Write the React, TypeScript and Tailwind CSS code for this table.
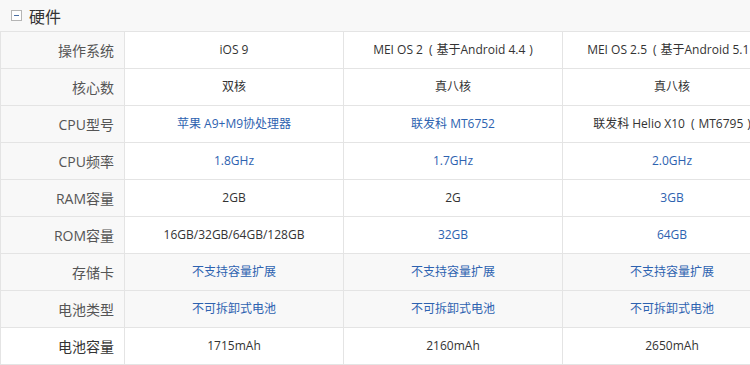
import React from 'react'

type Cell = { text: string; blue?: boolean }

interface Row {
  label: string
  cells: Cell[]
  shaded?: boolean
  strong?: boolean
}

const d = (text: string): Cell => ({ text })
const b = (text: string): Cell => ({ text, blue: true })

// wide spacing around the parens, like the CJK brackets in the original
const paren = (s: string) => '\u2002(\u2004' + s + '\u2004)'

const rows: Row[] = [
  {
    label: '操作系统',
    cells: [
      d('iOS 9'),
      d('MEI OS 2' + paren('基于Android 4.4')),
      d('MEI OS 2.5' + paren('基于Android 5.1')),
    ],
  },
  { label: '核心数', cells: [d('双核'), d('真八核'), d('真八核')] },
  {
    label: 'CPU型号',
    cells: [b('苹果 A9+M9协处理器'), b('联发科 MT6752'), d('联发科 Helio X10' + paren('MT6795'))],
  },
  { label: 'CPU频率', cells: [b('1.8GHz'), b('1.7GHz'), b('2.0GHz')] },
  { label: 'RAM容量', cells: [d('2GB'), d('2G'), b('3GB')] },
  { label: 'ROM容量', cells: [d('16GB/32GB/64GB/128GB'), b('32GB'), b('64GB')] },
  {
    label: '存储卡',
    shaded: true,
    cells: [b('不支持容量扩展'), b('不支持容量扩展'), b('不支持容量扩展')],
  },
  {
    label: '电池类型',
    shaded: true,
    cells: [b('不可拆卸式电池'), b('不可拆卸式电池'), b('不可拆卸式电池')],
  },
  { label: '电池容量', strong: true, cells: [d('1715mAh'), d('2160mAh'), d('2650mAh')] },
]

export default function App() {
  return (
    <div className="h-[365px] w-[750px] overflow-hidden bg-white font-['Open_Sans','Noto_Sans_CJK_SC',sans-serif]">
      <div className="w-[781px]">
        <div className="flex h-[32px] items-center border-b border-[#e4e4e4] bg-[#f8f8f8] pl-[11px]">
          <span className="flex h-[11px] w-[11px] items-center justify-center border border-[#b5b5b5] bg-white">
            <span className="h-px w-[5px] bg-[#4a6fa5]" />
          </span>
          <span className="ml-[7px] font-['Noto_Sans_CJK_SC',sans-serif] text-[16px] leading-none text-[#333]">
            硬件
          </span>
        </div>
        <div className="grid grid-cols-[124px_219px_219px_219px] border-l border-[#e4e4e4]">
          {rows.map((row) => (
            <React.Fragment key={row.label}>
              <div
                className={
                  row.strong
                    ? 'flex h-[37px] items-center justify-end border-r border-b border-[#e4e4e4] bg-white pr-[10px] text-[14px] text-[#333]'
                    : 'flex h-[37px] items-center justify-end border-r border-b border-[#e4e4e4] bg-[#f8f8f8] pr-[10px] text-[14px] text-[#555]'
                }
              >
                {row.label}
              </div>
              {row.cells.map((cell, i) => (
                <div
                  key={i}
                  className={
                    'flex h-[37px] items-center justify-center whitespace-nowrap border-r border-b border-[#e4e4e4] text-[12px] ' +
                    (row.shaded ? 'bg-[#f8f8f8] ' : 'bg-white ') +
                    (cell.blue ? 'text-[#2d62b0]' : 'text-[#333]')
                  }
                >
                  {cell.text}
                </div>
              ))}
            </React.Fragment>
          ))}
        </div>
      </div>
    </div>
  )
}
